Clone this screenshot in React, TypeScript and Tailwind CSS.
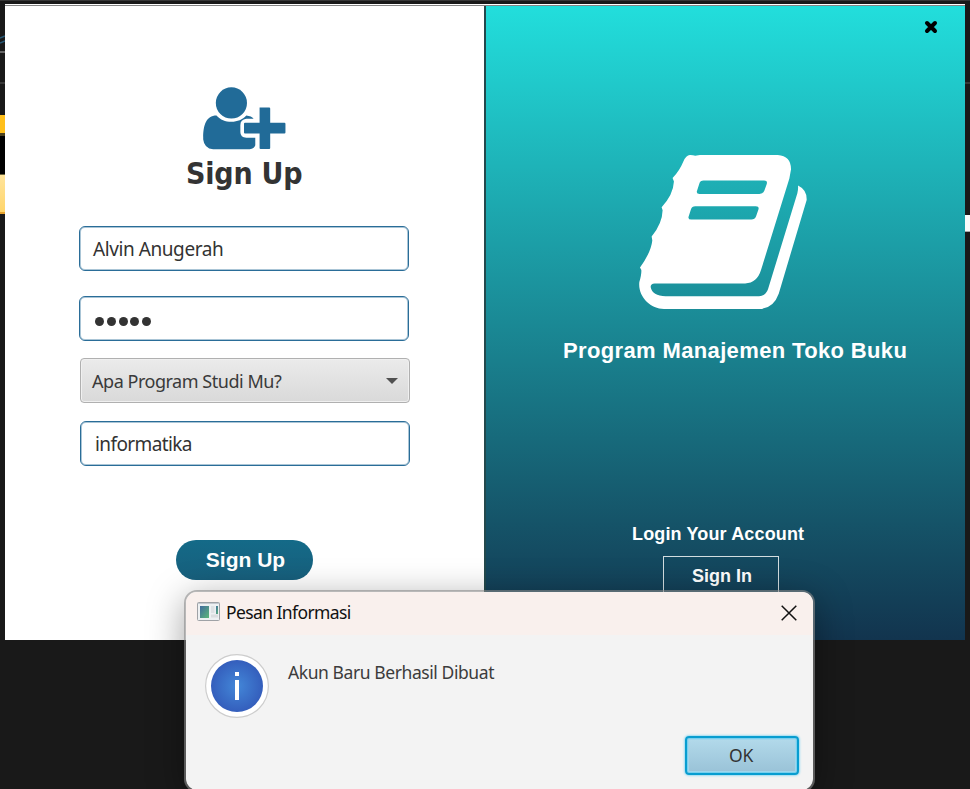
import React from "react";

function UserPlus() {
  return (
    <svg viewBox="0 0 249 190" className="h-[63px] w-[83px] shrink-0" fill="#216b98">
      <circle cx="85" cy="48" r="47" />
      <path d="M40 86C52 99 66 105 85 105S118 98 130 86C140 87 148 90 152 96H130Q112 98 112 115V136Q112 153 130 153H157V176Q154 186 140 188H30Q3 185 0 158C-1 120 7 86 40 86Z" />
      <path d="M170 62H199Q202 62 202 65V108H245Q248 108 248 111V137Q248 140 245 140H202V184Q202 187 199 187H173Q170 187 170 184V140H126Q123 140 123 137V111Q123 108 126 108H170Z" />
    </svg>
  );
}

function Book() {
  return (
    <svg viewBox="57 43 505 467" className="ml-[153px] mt-[148px] block h-[156px] w-[168px] shrink-0" fill="#fff">
      <path
        fillRule="evenodd"
        d="M190 65Q199 44 211 45Q220 45 226 47L240 45H474Q514 48 514 88L509 116L424 390Q412 430 376 431H104Q92 431 92 442Q97 469 137 470H418Q438 469 445 448L533 160Q536 148 535 137Q562 150 561 180L477 462Q461 507 418 508H132C91 508 53 470 58 427Q65 403 64 391L60 383Q93 338 97 302L95 290Q127 251 128 211L125 202Q160 165 162 125L158 114Q179 92 190 65ZM251 122Q241 122 238 132L231 154Q229 162 239 162H419Q430 162 434 152L441 132Q444 122 433 122ZM226 199Q216 199 213 209L206 231Q204 239 214 239H395Q405 239 409 229L416 209Q419 199 408 199Z"
      />
    </svg>
  );
}

function TextField({ children, className }: { children: React.ReactNode; className: string }) {
  return (
    <div className={`flex h-[45px] w-[330px] shrink-0 items-center rounded-[6px] border border-[#2a6d98] bg-white pl-[14px] text-[#333] shadow-[inset_0_0_0_1px_#2a6d9866] ${className}`}>
      {children}
    </div>
  );
}

function SignUpPane() {
  return (
    <section className="flex w-[479px] shrink-0 flex-col bg-white font-['Noto_Sans',sans-serif]">
      <div className="ml-[198px] mt-[81px]">
        <UserPlus />
      </div>
      <h1 className="ml-[181px] mt-[6px] h-[36px] whitespace-nowrap font-['DejaVu_Sans_Condensed','DejaVu_Sans',sans-serif] text-[30px] font-bold leading-[36px] tracking-[-0.2px] text-[#333]">
        Sign Up
      </h1>
      <TextField className="ml-[74px] mt-[34px]">
        <span className="-ml-px mt-[2px] text-[19px] tracking-[-0.42px]">Alvin Anugerah</span>
      </TextField>
      <TextField className="ml-[74px] mt-[25px]">
        <span className="ml-[1px] mt-[5px] flex gap-[2.8px]">
          {[0, 1, 2, 3, 4].map((n) => (
            <span key={n} className="size-[9px] rounded-full bg-[#333]" />
          ))}
        </span>
      </TextField>
      <div className="ml-[75px] mt-[17px] flex h-[45px] w-[330px] shrink-0 items-center justify-between rounded-[4px] border border-[#b0b0b0] bg-linear-to-b from-[#ebebeb] to-[#d9d9d9] pl-[11px] pr-[11px] text-[#3a3a3a] shadow-[inset_0_0_0_1px_#f0f0f0]">
        <span className="mt-[2px] text-[18px] tracking-[-0.47px]">Apa Program Studi Mu?</span>
        <span className="border-x-[6px] border-t-[6px] border-x-transparent border-t-[#505050]" />
      </div>
      <TextField className="ml-[75px] mt-[18px]">
        <span className="mt-[2px] text-[19px] tracking-[-0.6px]">informatika</span>
      </TextField>
      <button className="ml-[171px] mt-[74px] h-[40px] w-[137px] shrink-0 rounded-full bg-linear-to-b from-[#146a88] to-[#175f7c] pl-[2px] font-['Liberation_Sans',Arial,sans-serif] text-[21px] font-bold text-white">
        Sign Up
      </button>
    </section>
  );
}

function BrandPane() {
  return (
    <section className="flex flex-1 flex-col overflow-hidden border-l-2 border-[#23494d] bg-[linear-gradient(to_bottom,#22dedc,#12344e)] font-['Liberation_Sans',Arial,sans-serif] font-bold text-white">
      <div className="relative h-0">
        <svg viewBox="0 0 14 14" className="absolute right-[27px] top-[14px] size-[14px]" stroke="#000" strokeWidth="4" strokeLinecap="round">
          <path d="M3 3L11 11M11 3L3 11" />
        </svg>
      </div>
      <Book />
      <h2 className="ml-[77px] mt-[27px] whitespace-nowrap text-[22px] leading-[28px] tracking-[0.36px]">Program Manajemen Toko Buku</h2>
      <p className="ml-[146px] mt-[158px] whitespace-nowrap text-[18px] leading-[22px] tracking-[0.14px]">Login Your Account</p>
      <button className="ml-[177px] mt-[11px] h-[40px] w-[116px] shrink-0 border border-[#d3dde0] pl-[2px] text-[18px]">Sign In</button>
    </section>
  );
}

function AlertDialog() {
  return (
    <div className="absolute left-[184px] top-[590px] h-[202px] w-[631px] rounded-[13px] border-2 border-[#88888899] bg-[#f3f3f3] bg-clip-padding font-['Noto_Sans',sans-serif] shadow-[0_8px_36px_rgba(0,0,0,0.36)]">
      <header className="flex h-[43px] items-center rounded-t-[11px] bg-[#f9f0ed] pl-[11px] pr-[16px]">
        <svg viewBox="0 0 23 19" className="mb-[4px] h-[19px] w-[23px]">
          <defs>
            <linearGradient id="pane" x1="0" y1="0" x2="1" y2="1">
              <stop offset="0" stopColor="#416b9d" />
              <stop offset="1" stopColor="#5cb779" />
            </linearGradient>
          </defs>
          <rect x=".5" y=".5" width="22" height="18" rx="1" fill="#edf0f2" stroke="#9fa2a6" />
          <path d="M1 1.5H22" stroke="#c3c8cf" />
          <rect x="3" y="4" width="9" height="12" fill="url(#pane)" />
          <rect x="14" y="4" width="3.5" height="7" fill="#dde1e4" />
          <rect x="19" y="4" width="2" height="8" fill="url(#pane)" />
          <path d="M14 14H21" stroke="#dadddf" strokeWidth="3" />
        </svg>
        <span className="mb-[2px] ml-[6px] flex-1 text-[17.5px] tracking-[-0.6px] text-[#111]">Pesan Informasi</span>
        <svg viewBox="0 0 16 16" className="mb-[2px] size-[16px]" stroke="#111" strokeWidth="1.5">
          <path d="M.7.7L15.3 15.3M15.3.7L.7 15.3" />
        </svg>
      </header>
      <div className="flex pl-[19px] pt-[19px]">
        <svg viewBox="0 0 64 64" className="size-[64px]">
          <defs>
            <radialGradient id="info">
              <stop offset="0" stopColor="#4387d8" />
              <stop offset="1" stopColor="#345ebc" />
            </radialGradient>
          </defs>
          <circle cx="32" cy="32" r="31.4" fill="#fff" stroke="#cdcdcd" strokeWidth="1.2" />
          <circle cx="32" cy="32" r="26" fill="url(#info)" />
          <rect x="30" y="18" width="4" height="4" fill="#fff" />
          <rect x="30" y="26" width="4" height="20" fill="#fff" />
        </svg>
        <p className="ml-[19px] mt-[7px] whitespace-nowrap text-[17.5px] leading-[23px] tracking-[-0.42px] text-[#3c3c3c]">Akun Baru Berhasil Dibuat</p>
      </div>
      <button className="ml-[499px] mt-[18px] block h-[39px] w-[114px] rounded-[4px] border-2 border-[#089dd0] bg-linear-to-b from-[#b3daeb] to-[#99c2d7] pr-[2px] text-[17.5px] tracking-[-0.3px] text-[#333] shadow-[0_0_2px_1px_#9bdcf2,inset_0_0_0_1px_#78cfee,inset_0_0_0_2px_#a0d6ec]">
        OK
      </button>
    </div>
  );
}

export default function App() {
  return (
    <main className="relative flex h-[789px] w-[970px] flex-col overflow-hidden bg-[#191919]">
      <div className="h-[4px] shrink-0 border-t border-[#373737]" />
      <div className="flex h-[636px] shrink-0">
        <div className="flex w-[5px] shrink-0 flex-col">
          <svg viewBox="0 0 5 47" className="h-[47px] w-[5px] shrink-0" fill="none" stroke="#275875">
            <path d="M0 34L5 32M0 39L5 37" strokeWidth="1.4" />
          </svg>
          <div className="h-[2px] bg-[#656565]" />
          <div className="mt-[29px] h-[2px] bg-[#383838]" />
          <div className="mt-[31px] h-[18px] bg-[#ffbf1b]" />
          <div className="h-[3px] bg-[#4c421f]" />
          <div className="h-[38px] bg-black" />
          <div className="h-px bg-[#68613b]" />
          <div className="h-[37px] bg-linear-to-b from-[#ffe49b] to-[#ffd56a]" />
          <div className="h-[2px] bg-[#e5a12d]" />
        </div>
        <div className="flex w-[960px] shrink-0 flex-col">
          <div className="h-[2px] shrink-0 border-b border-[#858585] bg-white" />
          <div className="flex flex-1 overflow-hidden">
            <SignUpPane />
            <BrandPane />
          </div>
        </div>
        <div className="flex w-[5px] flex-col">
          <div className="mt-[78px] h-[2px] bg-[#383838]" />
          <div className="mt-[131px] h-[17px] border-b border-[#aaa] bg-[#fafafa]" />
        </div>
      </div>
      <AlertDialog />
    </main>
  );
}
